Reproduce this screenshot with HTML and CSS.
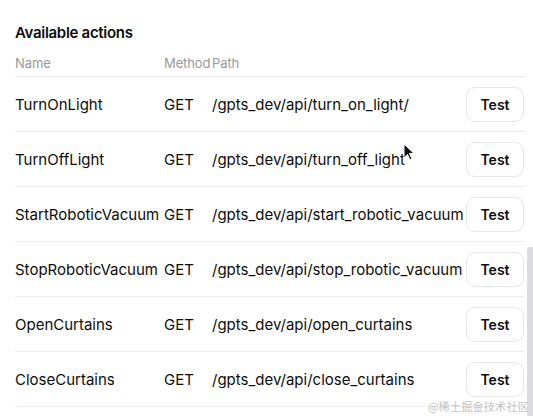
FILE: index.html
```html
<!DOCTYPE html>
<html>
<head>
<meta charset="utf-8">
<link rel="stylesheet" href="styles.css">
</head>
<body>
<div class="panel">
  <h2 class="title">Available actions</h2>
  <div class="table">
    <div class="row head">
      <div>Name</div><div>Method</div><div>Path</div><div></div>
    </div>
    <div class="row">
      <div>TurnOnLight</div><div>GET</div><div class="path">/gpts_dev/api/turn_on_light/</div><div><button class="btn">Test</button></div>
    </div>
    <div class="row">
      <div>TurnOffLight</div><div>GET</div><div class="path">/gpts_dev/api/turn_off_light</div><div><button class="btn">Test</button></div>
    </div>
    <div class="row">
      <div>StartRoboticVacuum</div><div>GET</div><div class="path">/gpts_dev/api/start_robotic_vacuum</div><div><button class="btn">Test</button></div>
    </div>
    <div class="row">
      <div>StopRoboticVacuum</div><div>GET</div><div class="path">/gpts_dev/api/stop_robotic_vacuum</div><div><button class="btn">Test</button></div>
    </div>
    <div class="row">
      <div>OpenCurtains</div><div>GET</div><div class="path">/gpts_dev/api/open_curtains</div><div><button class="btn">Test</button></div>
    </div>
    <div class="row">
      <div>CloseCurtains</div><div>GET</div><div class="path">/gpts_dev/api/close_curtains</div><div><button class="btn">Test</button></div>
    </div>
  </div>
</div>
<div class="scrollbar"></div>
<svg class="cursor" width="14" height="20" viewBox="0 0 14 20"><path d="M1 1 L1 15 L4.5 11.5 L7 17 L9 16 L6.5 10.5 L11 10.5 Z" fill="#111" stroke="#fff" stroke-width="1"/></svg>
<div class="watermark">@稀土掘金技术社区</div>
</body>
</html>
```
FILE: styles.css
```css
html, body {
  margin: 0;
  padding: 0;
  background: #fff;
  height: 416px;
  overflow: hidden;
}
body {
  font-family: Inter, "Noto Sans", sans-serif;
  color: #0d0d0d;
  position: relative;
}
.panel {
  padding: 23px 8px 0 15px;
}
.title {
  margin: 0;
  font-size: 15px;
  font-weight: 600;
  line-height: 20px;
  letter-spacing: -0.3px;
}
.table {
  margin-top: 10px;
}
.row {
  display: grid;
  grid-template-columns: 149px 48px 1fr auto;
  align-items: center;
  height: 55px;
  border-bottom: 1px solid #ececec;
  font-size: 15px;
  box-sizing: border-box;
}
.row.head {
  height: 24px;
  align-items: start;
  font-size: 13px;
  color: #9a9a9a;
  letter-spacing: -0.1px;
  line-height: 20px;
}
.row .path {
  white-space: nowrap;
}
.btn {
  font-family: Inter, "Noto Sans", sans-serif;
  font-size: 14px;
  font-weight: 600;
  color: #0d0d0d;
  background: #fff;
  border: 1px solid #e6e6e6;
  border-radius: 9px;
  width: 58px;
  height: 35px;
  padding: 0;
  margin-right: 1px;
}
.scrollbar {
  position: absolute;
  right: 0;
  top: 247px;
  width: 6px;
  height: 180px;
  background: #dcdcdf;
  border-radius: 3px 0 0 0;
}
.cursor {
  position: absolute;
  left: 403px;
  top: 143px;
}
.watermark {
  position: absolute;
  right: 4px;
  top: 398px;
  font-family: "Noto Sans CJK SC", sans-serif;
  font-size: 11px;
  color: #c4c4c4;
  letter-spacing: 0.3px;
}
```
